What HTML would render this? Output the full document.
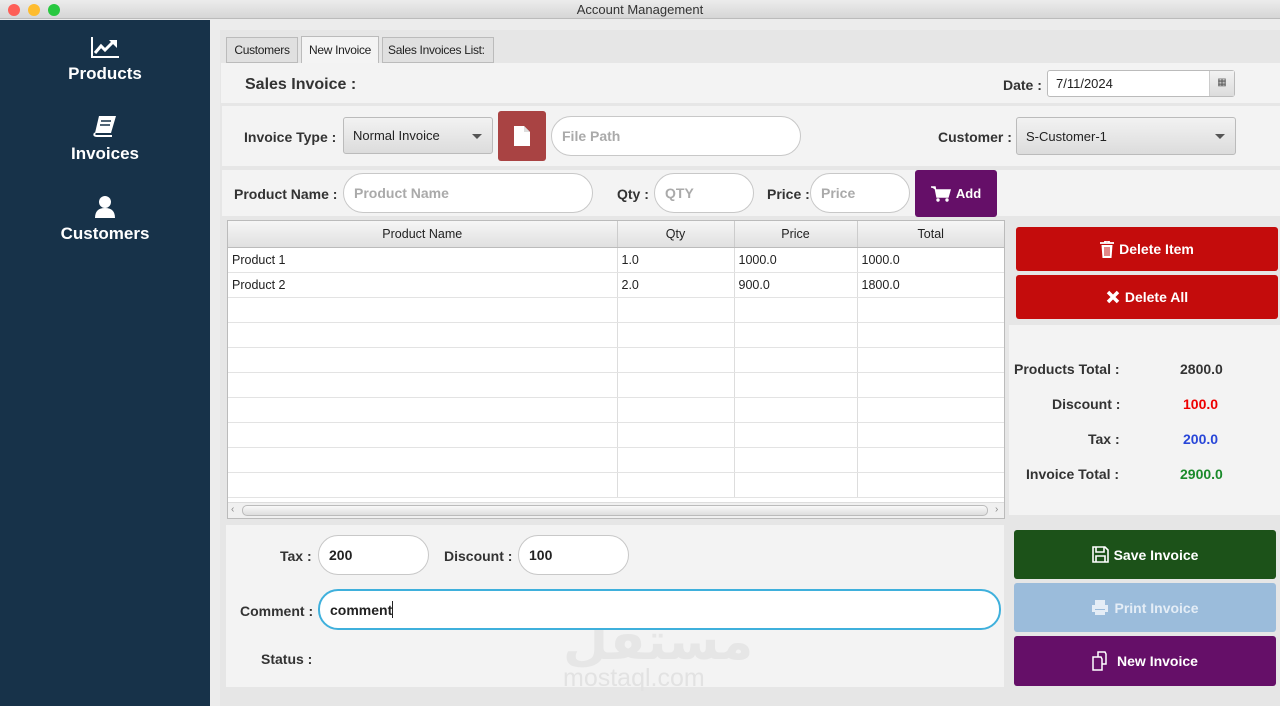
<!DOCTYPE html>
<html><head><meta charset="utf-8"><style>
*{box-sizing:border-box;margin:0;padding:0}
body{width:1280px;height:706px;overflow:hidden;background:#ececec;font-family:"Liberation Sans",sans-serif;position:relative;font-size:13px;color:#222}
.a{position:absolute}
.lbl{position:absolute;font-weight:bold;font-size:14px;color:#333}
.inp{position:absolute;background:#fff;border:1px solid #c8c8c8;border-radius:20px;padding-left:10px;font-size:14px;color:#aaa;font-weight:bold;display:flex;align-items:center}
.combo{position:absolute;background:linear-gradient(#f2f2f2,#dcdcdc);border:1px solid #bbb;border-radius:3px;display:flex;align-items:center;padding-left:9px;font-size:13px}
.combo:after{content:"";position:absolute;right:10px;top:50%;margin-top:-2px;border:5px solid transparent;border-top:5px solid #555;border-bottom:0}
.btn{position:absolute;color:#fff;font-weight:bold;font-size:14px;display:flex;align-items:center;justify-content:center;gap:5px;border-radius:3px}
.side{position:absolute;left:0;width:210px;text-align:center;color:#fff;font-weight:bold;font-size:18px}
.tab{position:absolute;font-size:12px;text-align:center;line-height:25px;letter-spacing:-0.3px;white-space:nowrap;overflow:hidden}
table{border-collapse:collapse;font-size:12.5px}
td{border-right:1px solid #ddd;border-bottom:1px solid #e3e3e3;height:25px;padding-left:4px}
th{font-weight:normal;height:26px;background:linear-gradient(#f6f6f6,#e0e0e0);border-right:1px solid #ccc;border-bottom:1px solid #bbb}
</style></head><body>
<div class="a" style="left:0;top:0;width:1280px;height:19px;background:linear-gradient(#ececec,#d6d6d6);border-bottom:1px solid #bbb;text-align:center;font-size:13px;line-height:19px;color:#333">Account Management</div>
<div class="a" style="left:8px;top:4px;width:12px;height:12px;border-radius:6px;background:#fe5f57"></div>
<div class="a" style="left:28px;top:4px;width:12px;height:12px;border-radius:6px;background:#febc2e"></div>
<div class="a" style="left:48px;top:4px;width:12px;height:12px;border-radius:6px;background:#28c840"></div>
<div class="a" style="left:0;top:20px;width:210px;height:686px;background:#173249"></div>
<svg class="a" style="left:90px;top:36px" width="30" height="22" viewBox="0 0 30 22"><path d="M2 1V21H29" stroke="#fff" stroke-width="2" fill="none"/><path d="M5 17L11 10L15 14L23 6" stroke="#fff" stroke-width="3" fill="none"/><path d="M19 4H27V12Z" fill="#fff"/></svg>
<div class="side" style="top:64px;font-size:17px">Products</div>
<svg class="a" style="left:93px;top:115px" width="24" height="22" viewBox="0 0 24 22"><path d="M6 1H23L18 18H2Z" fill="#fff"/><path d="M2 18Q0 21 4 21H19" stroke="#fff" stroke-width="2" fill="none"/><path d="M8 6H18M7 10H17" stroke="#173249" stroke-width="1.5"/></svg>
<div class="side" style="top:144px;font-size:17px">Invoices</div>
<svg class="a" style="left:94px;top:195px" width="22" height="24" viewBox="0 0 22 24"><circle cx="11" cy="7" r="6" fill="#fff"/><path d="M1 23Q1 13 11 13Q21 13 21 23Z" fill="#fff"/></svg>
<div class="side" style="top:224px;font-size:17px">Customers</div>

<div class="a" style="left:220px;top:30px;width:1060px;height:676px;background:#e6e6e6"></div>
<div class="tab" style="left:226px;top:37px;width:72px;height:26px;border:1px solid #bbb;background:#e0e0e0">Customers</div>
<div class="tab" style="left:301px;top:36px;width:78px;height:28px;border:1px solid #bbb;border-bottom:none;background:#f4f4f4;line-height:27px">New Invoice</div>
<div class="tab" style="left:382px;top:37px;width:112px;height:26px;border:1px solid #bbb;background:#e0e0e0;text-align:left;padding-left:5px">Sales Invoices List:</div>
<div class="a" style="left:221px;top:63px;width:1059px;height:40px;background:#f3f3f3"></div>
<div class="a" style="left:222px;top:106px;width:1058px;height:60px;background:#f3f3f3"></div>
<div class="a" style="left:222px;top:170px;width:1058px;height:46px;background:#f3f3f3"></div>
<div class="lbl" style="left:245px;top:76px;font-size:16px">Sales Invoice :</div>
<div class="lbl" style="left:1003px;top:77px">Date :</div>
<div class="a" style="left:1047px;top:70px;width:188px;height:27px;background:#fff;border:1px solid #bbb;border-radius:3px;padding:5px 8px;font-size:13px">7/11/2024</div>
<div class="a" style="left:1209px;top:71px;width:25px;height:25px;background:linear-gradient(#f2f2f2,#dcdcdc);border-left:1px solid #ccc;text-align:center;line-height:24px;font-size:10px;color:#555">▦</div>

<div class="lbl" style="left:244px;top:129px">Invoice Type :</div>
<div class="combo" style="left:343px;top:117px;width:150px;height:37px">Normal Invoice</div>
<div class="btn" style="left:498px;top:111px;width:48px;height:50px;background:#a94343"><svg width="16" height="20" viewBox="0 0 16 20"><path d="M0 0H10L16 6V20H0Z" fill="#fff"/><path d="M10 0V6H16" fill="#ddd"/></svg></div>
<div class="inp" style="left:551px;top:116px;width:250px;height:40px">File Path</div>
<div class="lbl" style="left:938px;top:129px">Customer :</div>
<div class="combo" style="left:1016px;top:117px;width:220px;height:38px">S-Customer-1</div>

<div class="lbl" style="left:234px;top:186px">Product Name :</div>
<div class="inp" style="left:343px;top:173px;width:250px;height:40px">Product Name</div>
<div class="lbl" style="left:617px;top:186px">Qty :</div>
<div class="inp" style="left:654px;top:173px;width:100px;height:40px">QTY</div>
<div class="lbl" style="left:767px;top:186px">Price :</div>
<div class="inp" style="left:810px;top:173px;width:100px;height:40px">Price</div>
<div class="btn" style="left:915px;top:170px;width:82px;height:47px;background:#650f68;font-size:13px"><svg width="20" height="16" viewBox="0 0 20 16"><path d="M0 1H4L6 11H17L19 4H5" fill="#fff" stroke="#fff" stroke-width="1.5"/><circle cx="7" cy="14" r="1.7" fill="#fff"/><circle cx="16" cy="14" r="1.7" fill="#fff"/></svg>Add</div>

<div class="a" style="left:227px;top:220px;width:778px;height:299px;background:#fff;border:1px solid #bbb;overflow:hidden">
<table style="width:777px"><tr><th style="width:389px">Product Name</th><th style="width:117px">Qty</th><th style="width:123px">Price</th><th>Total</th></tr>
<tr><td>Product 1</td><td>1.0</td><td>1000.0</td><td>1000.0</td></tr>
<tr><td>Product 2</td><td>2.0</td><td>900.0</td><td>1800.0</td></tr>
<tr><td></td><td></td><td></td><td></td></tr><tr><td></td><td></td><td></td><td></td></tr><tr><td></td><td></td><td></td><td></td></tr><tr><td></td><td></td><td></td><td></td></tr><tr><td></td><td></td><td></td><td></td></tr><tr><td></td><td></td><td></td><td></td></tr><tr><td></td><td></td><td></td><td></td></tr><tr><td></td><td></td><td></td><td></td></tr>
</table>
<div class="a" style="left:0;top:281px;width:777px;height:17px;background:#f0f0f0;border-top:1px solid #ddd"></div>
<div class="a" style="left:14px;top:284px;width:746px;height:11px;background:linear-gradient(#f8f8f8,#ddd);border:1px solid #bbb;border-radius:5px"></div>
<div class="a" style="left:3px;top:283px;font-size:10px;color:#888">‹</div><div class="a" style="left:767px;top:283px;font-size:10px;color:#888">›</div>
</div>

<div class="btn" style="left:1016px;top:227px;width:262px;height:44px;background:#c40c0c"><svg width="14" height="17" viewBox="0 0 14 17"><path d="M0 2H14M5 2V0H9V2" stroke="#fff" stroke-width="1.8" fill="none"/><path d="M1.5 4H12.5L11.5 17H2.5Z" fill="#fff"/><path d="M5 6V15M7 6V15M9 6V15" stroke="#c40c0c" stroke-width="1"/></svg>Delete Item</div>
<div class="btn" style="left:1016px;top:275px;width:262px;height:44px;background:#c40c0c"><svg width="14" height="14" viewBox="0 0 14 14"><path d="M2 2L12 12M12 2L2 12" stroke="#fff" stroke-width="3.5"/></svg>Delete All</div>
<div class="a" style="left:1009px;top:325px;width:271px;height:190px;background:#f3f3f3"></div>
<div class="lbl" style="left:1014px;top:361px">Products Total :</div><div class="lbl" style="left:1180px;top:361px">2800.0</div>
<div class="lbl" style="left:1052px;top:396px">Discount :</div><div class="lbl" style="left:1183px;top:396px;color:#e00">100.0</div>
<div class="lbl" style="left:1088px;top:431px">Tax :</div><div class="lbl" style="left:1183px;top:431px;color:#2846d8">200.0</div>
<div class="lbl" style="left:1026px;top:466px">Invoice Total :</div><div class="lbl" style="left:1180px;top:466px;color:#1a8a2a">2900.0</div>

<div class="a" style="left:226px;top:525px;width:778px;height:162px;background:#f3f3f3"></div>
<div class="a" style="left:563px;top:612px;font-size:52px;font-weight:bold;color:#e6e6e6;font-family:'DejaVu Sans',sans-serif">مستقل</div>
<div class="a" style="left:563px;top:664px;font-size:25px;color:#e2e2e2">mostaql.com</div>
<div class="lbl" style="left:280px;top:548px">Tax :</div>
<div class="inp" style="left:318px;top:535px;width:111px;height:40px;color:#222">200</div>
<div class="lbl" style="left:444px;top:548px">Discount :</div>
<div class="inp" style="left:518px;top:535px;width:111px;height:40px;color:#222">100</div>
<div class="lbl" style="left:240px;top:603px">Comment :</div>
<div class="inp" style="left:318px;top:589px;width:683px;height:41px;color:#222;border:2px solid #3fb0dc">comment<span style="display:inline-block;width:1px;height:17px;background:#222"></span></div>
<div class="lbl" style="left:261px;top:651px">Status :</div>

<div class="btn" style="left:1014px;top:530px;width:262px;height:49px;background:#1c5219"><svg width="17" height="17" viewBox="0 0 17 17"><path d="M1 1H13L16 4V16H1Z" fill="none" stroke="#fff" stroke-width="1.6"/><path d="M4 1V6H12V1M4 16V10H13V16" fill="none" stroke="#fff" stroke-width="1.6"/></svg>Save Invoice</div>
<div class="btn" style="left:1014px;top:583px;width:262px;height:49px;background:#9bbcdb;color:#e4edf6"><svg width="18" height="17" viewBox="0 0 18 17"><path d="M4 1H14V6H4Z" fill="#e4edf6"/><path d="M1 6H17V13H14V10H4V13H1Z" fill="#e4edf6"/><path d="M4 11H14V16H4Z" fill="#e4edf6"/></svg>Print Invoice</div>
<div class="btn" style="left:1014px;top:636px;width:262px;height:50px;background:#650f68"><svg width="20" height="20" viewBox="0 0 20 20"><path d="M6 1H13L14 3V13H6Z" fill="none" stroke="#fff" stroke-width="1.5"/><path d="M1 6H9L10 8V19H1Z" fill="#650f68" stroke="#fff" stroke-width="1.5"/></svg>New Invoice</div>
</body></html>
